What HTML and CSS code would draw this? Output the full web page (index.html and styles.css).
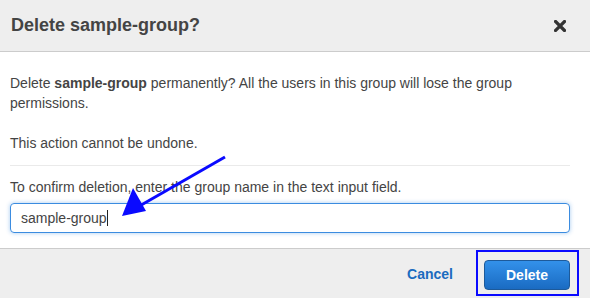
FILE: index.html
```
<!DOCTYPE html>
<html lang="en">
<head>
    <meta charset="UTF-8">
    <title>Delete sample-group?</title>
    <link rel="stylesheet" href="styles.css">
</head>
<body>
    <div class="dialog">
        <div class="dialog-header">
            <h2>Delete sample-group?</h2>
            <span class="close">
                <svg width="12" height="12" viewBox="0 0 12 12"><path d="M1.5 1.5 L10.5 10.5 M10.5 1.5 L1.5 10.5" stroke="#333" stroke-width="3.2" stroke-linecap="square"/></svg>
            </span>
        </div>

        <div class="dialog-body">
            <p>Delete <strong>sample-group</strong> permanently? All the users in this group will lose the group permissions.</p>
            <p>This action cannot be undone.</p>
            <hr class="divider">
            <label class="confirm-label" for="groupName">To confirm deletion, enter the group name in the text input field.</label>
            <div class="input-box" id="groupName">sample-group<span class="caret"></span></div>
        </div>

        <div class="dialog-footer">
            <button class="btn-link">Cancel</button>
            <div class="highlight">
                <button class="btn-primary">Delete</button>
            </div>
        </div>

        <!-- flecha de la anotación -->
        <svg class="arrow" width="590" height="298" viewBox="0 0 590 298">
            <line x1="225" y1="157" x2="136" y2="208" stroke="#0a0aff" stroke-width="3"/>
            <polygon points="122,216 133,188 146,211" fill="#0a0aff"/>
        </svg>
    </div>
</body>
</html>
```

FILE: styles.css
```
body {
    margin: 0;
    font-family: "Liberation Sans", Arial, sans-serif;
    color: #444;
    background: #fff;
}
.dialog {
    position: relative;
    width: 590px;
    height: 298px;
    overflow: hidden;
}
.dialog-header {
    display: flex;
    align-items: center;
    justify-content: space-between;
    height: 51px;
    padding: 0 24px 0 11px;
    background-color: #eee;
    border-bottom: 1px solid #ccc;
}
.dialog-header h2 {
    margin: 0;
    font-size: 18px;
    font-weight: bold;
    color: #444;
}
.close {
    display: flex;
    margin-top: 1px;
}
.dialog-body {
    padding: 21px 20px 15px 10px;
    font-size: 14px;
    line-height: 20px;
}
.dialog-body p {
    margin: 0 0 20px 0;
}
.dialog-body p:nth-of-type(2) {
    margin-bottom: 12px;
}
.divider {
    border: 0;
    border-top: 1px solid #eaeaea;
    margin: 0 0 11px 0;
}
.confirm-label {
    display: block;
    margin-bottom: 6px;
}
.input-box {
    height: 28px;
    line-height: 28px;
    padding: 0 10px;
    border: 1px solid #3b8ce0;
    border-radius: 4px;
    box-shadow: 0 0 4px rgba(59, 140, 224, 0.45);
    color: #444;
    font-size: 14px;
}
.caret {
    display: inline-block;
    width: 1px;
    height: 16px;
    background: #222;
    vertical-align: -3px;
}
.dialog-footer {
    display: flex;
    justify-content: flex-end;
    align-items: center;
    height: 50px;
    padding-right: 20px;
    background-color: #eee;
    border-top: 1px solid #ccc;
}
.btn-link {
    background: none;
    border: none;
    font-family: inherit;
    font-size: 14px;
    font-weight: bold;
    color: #1a6bbf;
    padding: 0 15px;
    margin-right: 16px;
    margin-top: -1px;
}
.highlight {
    position: relative;
    display: flex;
}
.highlight::after {
    content: "";
    position: absolute;
    left: -8px;
    top: -9px;
    right: -9px;
    bottom: -6px;
    border: 2px solid #0a0aff;
}
.btn-primary {
    width: 86px;
    height: 30px;
    font-family: inherit;
    font-size: 14px;
    font-weight: bold;
    color: white;
    border: 1px solid #1d5a9a;
    border-radius: 4px;
    background: linear-gradient(#3391ea, #1a6bc2);
    margin-top: 1px;
}
.arrow {
    position: absolute;
    left: 0;
    top: 0;
    pointer-events: none;
}
```
